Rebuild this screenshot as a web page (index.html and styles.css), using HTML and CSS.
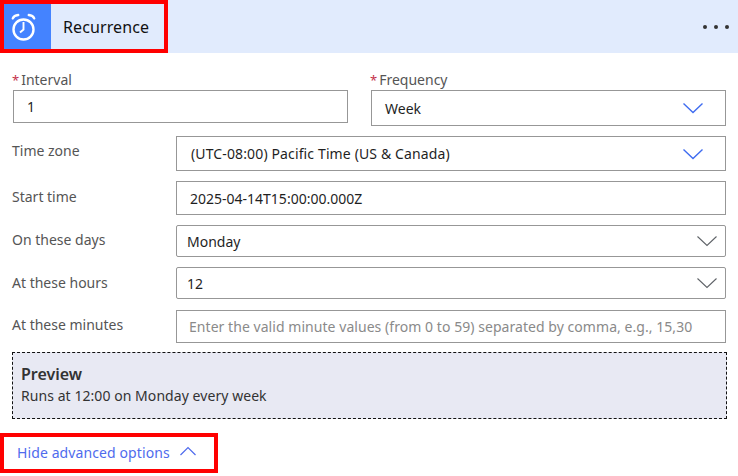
FILE: index.html
```html
<!DOCTYPE html>
<html lang="en">

<head>
    <meta charset="UTF-8">
    <meta name="viewport" content="width=device-width, initial-scale=1.0">
    <link rel="stylesheet" href="styles.css">
    <title>Recurrence</title>
</head>

<body>

    <div class="header">
        <div class="title-box">
            <div class="icon-box">
                <svg width="28" height="28" viewBox="0 0 28 28" fill="none" stroke="#fff">
                    <circle cx="13.5" cy="16.5" r="10" stroke-width="2.4"/>
                    <path d="M13.5 9V16.5L10 19.5" stroke-width="1.9"/>
                    <path d="M2.8 5.4C3.5 3.6 5.5 2.2 8.2 2M24.2 5.4C23.5 3.6 21.5 2.2 18.8 2" stroke-width="2.4" stroke-linecap="round"/>
                </svg>
            </div>
            <span class="title">Recurrence</span>
        </div>
        <div class="more"><i></i><i></i><i></i></div>
    </div>

    <div class="form">
        <div class="top-row">
            <div class="col-interval">
                <label class="top-label"><span class="req">*</span>Interval</label>
                <div class="field h33"><span class="value">1</span></div>
            </div>
            <div class="col-frequency">
                <label class="top-label"><span class="req">*</span>Frequency</label>
                <div class="field h36 between">
                    <span class="value">Week</span>
                    <svg class="chev-blue" width="22" height="12" viewBox="0 0 22 12" fill="none" stroke="#3f6cf0" stroke-width="1.4"><path d="M1.5 1.5 11 10.5 20.5 1.5"/></svg>
                </div>
            </div>
        </div>

        <div class="row mt10">
            <label class="side-label">Time zone</label>
            <div class="field h35 between wide">
                <span class="value spaced">(UTC-08:00) Pacific Time (US &amp; Canada)</span>
                <svg class="chev-blue" width="22" height="12" viewBox="0 0 22 12" fill="none" stroke="#3f6cf0" stroke-width="1.4"><path d="M1.5 1.5 11 10.5 20.5 1.5"/></svg>
            </div>
        </div>

        <div class="row mt10">
            <label class="side-label lift4">Start time</label>
            <div class="field h34 wide"><span class="value">2025-04-14T15:00:00.000Z</span></div>
        </div>

        <div class="row mt10">
            <label class="side-label lift4">On these days</label>
            <div class="field h32 between wide select">
                <span class="value">Monday</span>
                <svg class="chev-grey" width="22" height="12" viewBox="0 0 22 12" fill="none" stroke="#5f6368" stroke-width="1.1"><path d="M1.5 1.5 11 10.5 20.5 1.5"/></svg>
            </div>
        </div>

        <div class="row mt10">
            <label class="side-label lift2">At these hours</label>
            <div class="field h32 between wide select">
                <span class="value">12</span>
                <svg class="chev-grey" width="22" height="12" viewBox="0 0 22 12" fill="none" stroke="#5f6368" stroke-width="1.1"><path d="M1.5 1.5 11 10.5 20.5 1.5"/></svg>
            </div>
        </div>

        <div class="row mt11">
            <label class="side-label lift4">At these minutes</label>
            <div class="field h33 wide minutes"><span class="placeholder">Enter the valid minute values (from 0 to 59) separated by comma, e.g., 15,30</span></div>
        </div>

        <div class="preview">
            <div class="preview-title">Preview</div>
            <div class="preview-text">Runs at 12:00 on Monday every week</div>
        </div>
    </div>

    <div class="advanced">
        <span class="advanced-text">Hide advanced options</span>
        <svg class="caret" width="18" height="10" viewBox="0 0 18 10" fill="none" stroke="#4f6bed" stroke-width="1.2"><path d="M1.5 9 9 1.5 16.5 9"/></svg>
    </div>

</body>

</html>
```

FILE: styles.css
```css
body {
    margin: 0;
    font-family: "Noto Sans", "Open Sans", sans-serif;
    font-size: 14px;
    color: #242424;
    background: white;
    overflow: hidden;
}

.header {
    display: flex;
    align-items: center;
    justify-content: space-between;
    height: 53px;
    background: #e1ebfd;
}

.title-box {
    display: flex;
    align-items: center;
    box-sizing: border-box;
    width: 168px;
    height: 53px;
    border: 4px solid #ff0000;
}

.icon-box {
    display: flex;
    align-items: center;
    box-sizing: border-box;
    width: 47px;
    height: 45px;
    padding-left: 6px;
    background: #4483ff;
}

.title {
    margin-left: 12px;
    font-size: 16px;
    letter-spacing: 0.1px;
    color: #111;
}

.more {
    display: flex;
    gap: 7px;
    margin-right: 9px;
}

.more i {
    width: 4px;
    height: 4px;
    border-radius: 50%;
    background: #333;
}

.form {
    padding: 0 12px;
}

.top-row {
    display: flex;
    align-items: flex-start;
    padding-top: 17px;
}

.col-interval {
    width: 335px;
    margin-left: 1px;
}

.col-frequency {
    width: 355px;
    margin-left: 23px;
}

.top-label {
    display: block;
    height: 20px;
    line-height: 20px;
    color: #555;
}

.col-interval .top-label {
    margin-left: -1px;
}

.col-frequency .top-label {
    margin-left: -1px;
}

.req {
    font-size: 13px;
    color: #c4314b;
    margin-right: 2px;
}

.row {
    display: flex;
    align-items: center;
}

.mt10 {
    margin-top: 10px;
}

.mt11 {
    margin-top: 11px;
}

.side-label {
    width: 164px;
    flex-shrink: 0;
    margin-bottom: 6px;
    color: #555;
}

.side-label.lift4 {
    margin-bottom: 4px;
}

.side-label.lift2 {
    margin-bottom: 2px;
}

.field {
    display: flex;
    align-items: center;
    box-sizing: border-box;
    border: 1px solid #979797;
    padding: 0 13px;
    background: white;
}

.wide {
    width: 550px;
}

.between {
    justify-content: space-between;
}

.select {
    padding: 0 10px;
    border-radius: 2px;
}

.minutes {
    padding: 0 12px;
}

.h32 { height: 32px; }
.h33 { height: 33px; }
.h34 { height: 34px; }
.h35 { height: 35px; }
.h36 { height: 36px; }

.value {
    color: #1f1f1f;
}

.spaced {
    margin-left: 1px;
    letter-spacing: 0.13px;
}

.chev-blue {
    margin-right: 8px;
}

.chev-grey {
    margin-right: -3px;
}

.placeholder {
    color: #8a8a8a;
    letter-spacing: 0.05px;
    white-space: nowrap;
}

.preview {
    box-sizing: border-box;
    width: 715px;
    height: 67px;
    margin-top: 9px;
    padding: 9px 8px;
    border: 1px dashed #111;
    background: #e8e9f3;
}

.preview-title {
    font-size: 16px;
    font-weight: 600;
    line-height: 24px;
    color: #333;
}

.preview-text {
    line-height: 20px;
    letter-spacing: 0.06px;
    color: #333;
}

.advanced {
    display: flex;
    align-items: center;
    gap: 9px;
    box-sizing: border-box;
    width: 218px;
    height: 40px;
    margin-top: 14px;
    padding-left: 13px;
    padding-bottom: 2px;
    border: 4px solid #ff0000;
    color: #4f6bed;
}

.advanced-text {
    letter-spacing: 0.1px;
}

.caret {
    margin-bottom: 3px;
}
```
